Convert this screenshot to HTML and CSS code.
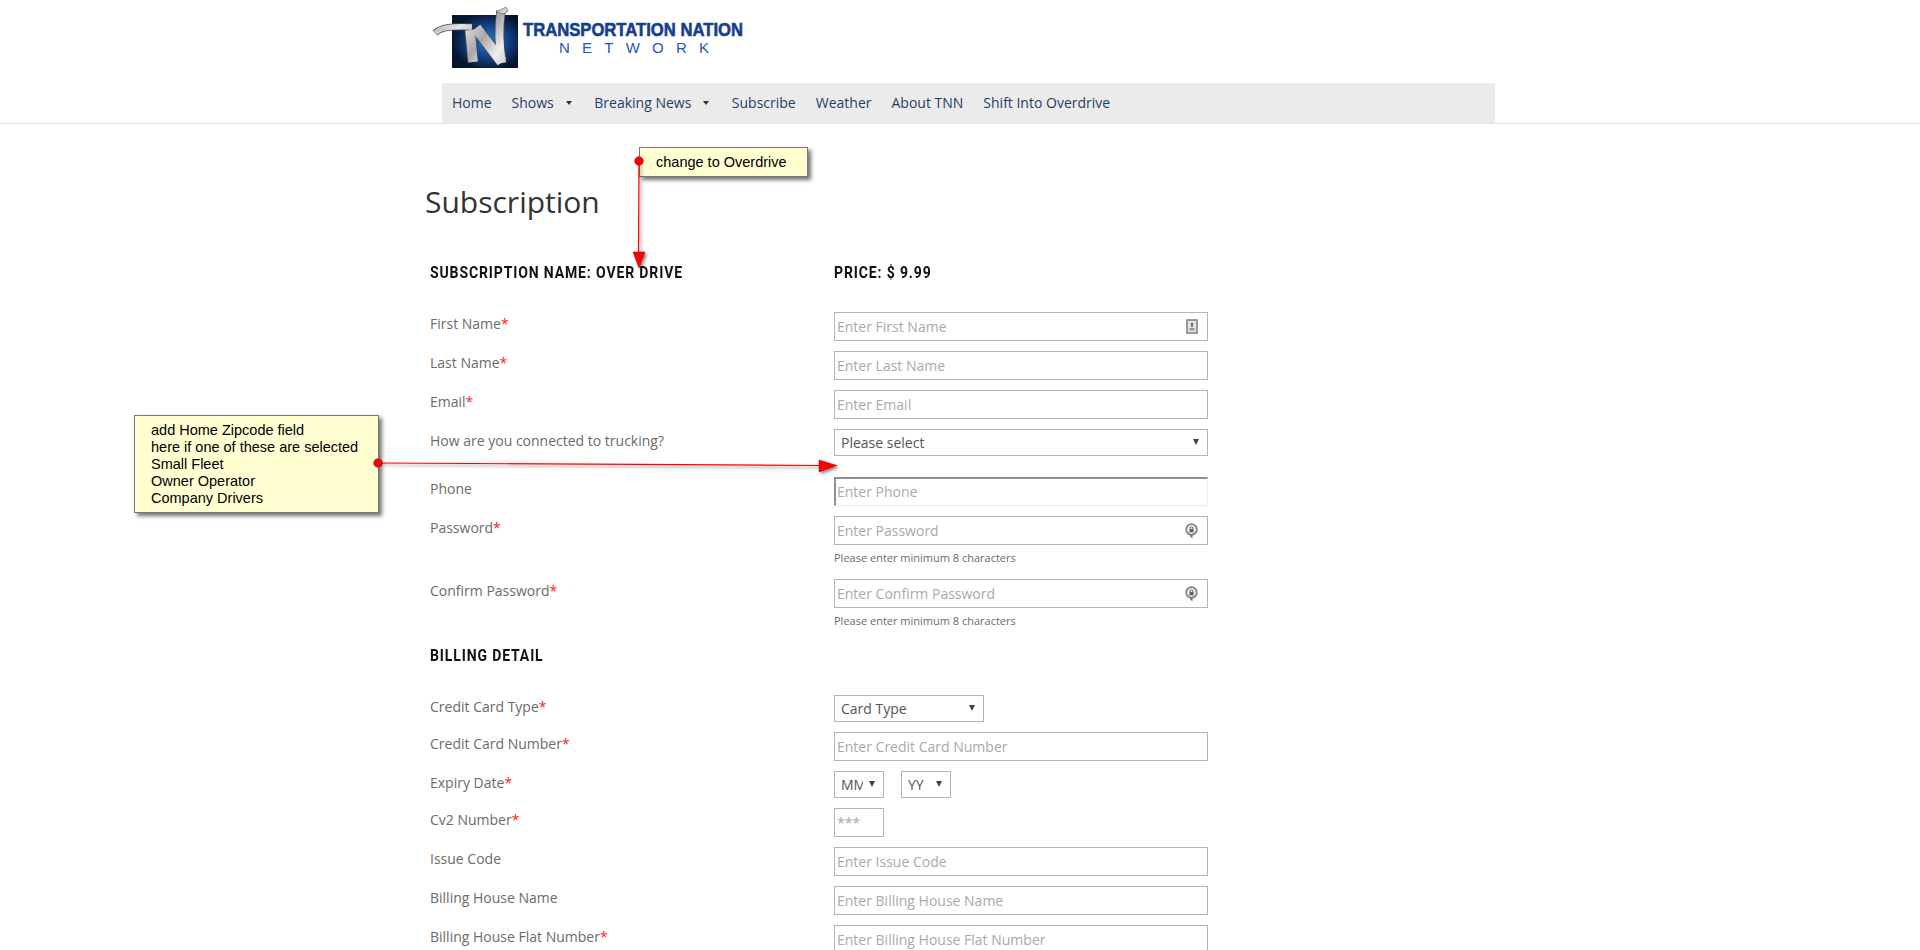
FILE: index.html
```html
<!DOCTYPE html>
<html lang="en">
<head>
<meta charset="utf-8">
<title>Subscription</title>
<link rel="stylesheet" href="styles.css">
</head>
<body>
<header class="site-header">
  <div class="logo-row">
    <svg class="logo" width="360" height="66" viewBox="0 0 360 66" aria-label="Transportation Nation Network">
      <defs>
        <radialGradient id="blue" cx="0.55" cy="0.5" r="0.55"><stop offset="0" stop-color="#1f78dc"/><stop offset="0.55" stop-color="#124286"/><stop offset="1" stop-color="#06152e"/></radialGradient>
        <linearGradient id="chrome" gradientUnits="userSpaceOnUse" x1="0" y1="0" x2="80" y2="60"><stop offset="0" stop-color="#9a9a9a"/><stop offset="0.35" stop-color="#e6e6e6"/><stop offset="0.6" stop-color="#a8a8a8"/><stop offset="0.8" stop-color="#efefef"/><stop offset="1" stop-color="#bdbdbd"/></linearGradient>
      </defs>
      <rect x="20" y="9" width="66" height="53" fill="url(#blue)"/>
      <g fill="none" stroke-linejoin="round">
        <g stroke="#4a4a4a">
          <path d="M3 27C9 21 20 20 40 21" stroke-width="7"/>
          <path d="M38 24 41 56" stroke-width="11"/>
          <path d="M44 22 70 56" stroke-width="12"/>
          <path d="M70 57C67 40 66 25 69 5" stroke-width="9.5"/>
        </g>
        <g stroke="url(#chrome)">
          <path d="M3 27C9 21 20 20 40 21" stroke-width="5.5"/>
          <path d="M38 24 41 56" stroke-width="9.5"/>
          <path d="M44 22 70 56" stroke-width="10.5"/>
          <path d="M70 57C67 40 66 25 69 5" stroke-width="8"/>
        </g>
      </g>
      <path d="M64 6 74 1 76 5 72 8Z" fill="#cfcfcf" stroke="#555" stroke-width="0.6"/>
      <text class="logo-top" x="91" y="30" textLength="220" lengthAdjust="spacingAndGlyphs">TRANSPORTATION NATION</text>
      <text class="logo-bottom" x="127" y="47" textLength="150" lengthAdjust="spacing">NETWORK</text>
    </svg>
  </div>
  <nav class="nav">
    <a class="nav-item">Home</a>
    <a class="nav-item">Shows<span class="caret"></span></a>
    <a class="nav-item">Breaking News<span class="caret"></span></a>
    <a class="nav-item">Subscribe</a>
    <a class="nav-item">Weather</a>
    <a class="nav-item">About TNN</a>
    <a class="nav-item">Shift Into Overdrive</a>
  </nav>
</header>

<main class="page">
  <h1 class="title">Subscription</h1>
  <form class="form">
    <div class="section-row">
      <h2 class="section">Subscription Name: Over Drive</h2>
      <h2 class="section">Price: $ 9.99</h2>
    </div>

    <div class="row"><label class="label">First Name<span class="req">*</span></label>
      <div class="field"><input class="input" placeholder="Enter First Name">
        <svg class="field-icon" width="12" height="15" viewBox="0 0 12 15"><rect x="1" y="1" width="10" height="13" fill="#e4e4e4" stroke="#858585" stroke-width="1.6"/><circle cx="6" cy="5" r="1.3" fill="#666"/><path d="M5.3 6h1.4l.5 2H4.8z" fill="#666"/><path d="M3.5 9h5v2.5h-5z" fill="#999"/></svg>
      </div></div>
    <div class="row"><label class="label">Last Name<span class="req">*</span></label>
      <div class="field"><input class="input" placeholder="Enter Last Name"></div></div>
    <div class="row"><label class="label">Email<span class="req">*</span></label>
      <div class="field"><input class="input" placeholder="Enter Email"></div></div>
    <div class="row row-gap"><label class="label">How are you connected to trucking?</label>
      <div class="field"><div class="select select-full">Please select<span class="arrow"></span></div></div></div>
    <div class="row"><label class="label">Phone</label>
      <div class="field"><input class="input input-inset" placeholder="Enter Phone"></div></div>
    <div class="row row-hint"><label class="label">Password<span class="req">*</span></label>
      <div class="field"><input class="input" placeholder="Enter Password">
        <svg class="field-icon" width="13" height="16" viewBox="0 0 13 16"><circle cx="6.5" cy="6.5" r="5.3" fill="#f2f2f2" stroke="#858585" stroke-width="1.8"/><rect x="4.4" y="6" width="4.2" height="3.4" fill="#666"/><path d="M5.2 6V5a1.3 1.3 0 0 1 2.6 0v1" fill="none" stroke="#666"/><path d="M7.5 10.5 4.6 13 7.5 15.6Z" fill="#777"/></svg>
        <p class="hint">Please enter minimum 8 characters</p></div></div>
    <div class="row row-hint"><label class="label">Confirm Password<span class="req">*</span></label>
      <div class="field"><input class="input" placeholder="Enter Confirm Password">
        <svg class="field-icon" width="13" height="16" viewBox="0 0 13 16"><circle cx="6.5" cy="6.5" r="5.3" fill="#f2f2f2" stroke="#858585" stroke-width="1.8"/><rect x="4.4" y="6" width="4.2" height="3.4" fill="#666"/><path d="M5.2 6V5a1.3 1.3 0 0 1 2.6 0v1" fill="none" stroke="#666"/><path d="M7.5 10.5 4.6 13 7.5 15.6Z" fill="#777"/></svg>
        <p class="hint">Please enter minimum 8 characters</p></div></div>

    <h2 class="section section-billing">Billing Detail</h2>

    <div class="row"><label class="label">Credit Card Type<span class="req">*</span></label>
      <div class="field"><div class="select select-card">Card Type<span class="arrow"></span></div></div></div>
    <div class="row"><label class="label">Credit Card Number<span class="req">*</span></label>
      <div class="field"><input class="input" placeholder="Enter Credit Card Number"></div></div>
    <div class="row"><label class="label">Expiry Date<span class="req">*</span></label>
      <div class="field field-inline"><div class="select select-small"><span class="clip">MM</span><span class="arrow"></span></div><div class="select select-small">YY<span class="arrow"></span></div></div></div>
    <div class="row"><label class="label">Cv2 Number<span class="req">*</span></label>
      <div class="field"><input class="input input-cvv" placeholder="***"></div></div>
    <div class="row"><label class="label">Issue Code</label>
      <div class="field"><input class="input" placeholder="Enter Issue Code"></div></div>
    <div class="row"><label class="label">Billing House Name</label>
      <div class="field"><input class="input" placeholder="Enter Billing House Name"></div></div>
    <div class="row"><label class="label">Billing House Flat Number<span class="req">*</span></label>
      <div class="field"><input class="input" placeholder="Enter Billing House Flat Number"></div></div>
  </form>
</main>

<div class="note note-overdrive">change to Overdrive</div>
<div class="note note-zip">add Home Zipcode field<br>here if one of these are selected<br>Small Fleet<br>Owner Operator<br>Company Drivers</div>
<svg class="arrows" width="1920" height="950" viewBox="0 0 1920 950">
  <defs><filter id="soft" x="-30%" y="-30%" width="180%" height="180%"><feDropShadow dx="2" dy="2" stdDeviation="1.5" flood-color="#000" flood-opacity="0.45"/></filter></defs>
  <g filter="url(#soft)">
    <path d="M639 161 638.5 254" stroke="#f00" stroke-width="1.2" fill="none"/>
    <path d="M633 252H645L639 268Z" fill="#f00" stroke="#a00" stroke-width="0.5"/>
    <path d="M378 463 820 465.5" stroke="#f00" stroke-width="1.2" fill="none"/>
    <path d="M819 460 837 465.5 819 472Z" fill="#f00" stroke="#a00" stroke-width="0.5"/>
  </g>
  <circle cx="639" cy="161" r="4.3" fill="#f00" stroke="#b00" stroke-width="0.6"/>
  <circle cx="378" cy="463" r="4.3" fill="#f00" stroke="#b00" stroke-width="0.6"/>
</svg>
</body>
</html>
```
FILE: styles.css
```css
* { box-sizing: border-box; }
html, body { height: 950px; overflow: hidden; }
body { margin: 0; background: #fff; font-family: "Open Sans", sans-serif; font-size: 14px; color: #6b6b6b; position: relative; }

.site-header { height: 124px; border-bottom: 1px solid #e5e5e5; display: flex; flex-direction: column; }
.logo-row { height: 83px; padding: 6px 0 0 432px; }
.logo { display: block; }
.logo-top { font-family: "Liberation Sans", sans-serif; font-weight: 700; font-size: 18.5px; fill: #173f8c; stroke: #173f8c; stroke-width: 0.6px; }
.logo-bottom { font-family: "Liberation Sans", sans-serif; font-size: 15px; fill: #2259b8; }

.nav { margin-left: 442px; width: 1053px; height: 40px; background: #ebebeb; display: flex; align-items: center; padding: 0 0 2px 10px; }
.nav-item { color: #1f4164; font-size: 14px; margin-right: 20px; display: flex; align-items: center; }
.caret { width: 0; height: 0; margin: 1px 2.5px 0 12px; border: 3px solid transparent; border-top: 4px solid #333; border-bottom: 0; }

.page { padding-left: 425px; }
.title { margin: 0; padding-top: 55px; font-size: 30px; line-height: 46px; font-weight: 400; color: #333; height: 101px; }
.form { padding-left: 5px; padding-top: 36px; }
.section-row { display: grid; grid-template-columns: 404px 374px; height: 24px; margin-bottom: 27px; }
.section { margin: 0; font-family: Roboto, sans-serif; font-size: 16px; line-height: 24px; font-weight: 700; letter-spacing: 1px; text-transform: uppercase; color: #111; transform: scaleX(0.875); transform-origin: left center; }
.section-billing { height: 24px; margin: 16px 0 27px; }

.row { display: grid; grid-template-columns: 404px 374px; margin-bottom: 10px; }
.row-gap { margin-bottom: 21px; }
.row-hint { margin-bottom: 14px; }
.label { display: block; padding-top: 1px; line-height: 22px; color: #6b6b6b; }
.req { color: #f22; }

.field { position: relative; grid-column: 2; }
.field-inline { display: flex; gap: 17px; }
.input { display: block; width: 374px; height: 29px; border: 1px solid #b5b5b5; border-radius: 0; padding: 0 2px; background: #fff; font: 14px "Open Sans", sans-serif; color: #555; outline: 0; }
.input::placeholder { color: #a9a9a9; opacity: 1; }
.input-inset { border-color: #ececec; border-top: 2px solid #8f8f8f; border-left: 2px solid #8f8f8f; padding: 0 1px 2px; }
.input-cvv { width: 50px; }
.field-icon { position: absolute; right: 10px; top: 7px; }

.select { position: relative; height: 27px; border: 1px solid #b5b5b5; padding-left: 6px; line-height: 25px; color: #555; background: #fff; font-size: 14px; }
.select-full { width: 374px; }
.select-card { width: 150px; }
.select-small { width: 50px; }
.clip { display: block; width: 22px; overflow: hidden; }
.arrow { position: absolute; right: 8px; top: 9px; width: 0; height: 0; border: 3.5px solid transparent; border-top: 6px solid #444; border-bottom: 0; }
.hint { margin: 6px 0 0; font-size: 11px; line-height: 14px; color: #6b6b6b; }

.note { position: absolute; background: #ffffd2; border: 1px solid #777; box-shadow: 3px 3px 4px rgba(0, 0, 0, 0.55); color: #000; font-family: "Liberation Sans", Arial, sans-serif; font-size: 14.5px; }
.note-overdrive { left: 639px; top: 147px; width: 169px; height: 30px; line-height: 28px; padding-left: 16px; }
.note-zip { left: 134px; top: 415px; width: 245px; height: 98px; line-height: 17px; padding: 6px 0 0 16px; }
.arrows { position: absolute; left: 0; top: 0; pointer-events: none; }
```
